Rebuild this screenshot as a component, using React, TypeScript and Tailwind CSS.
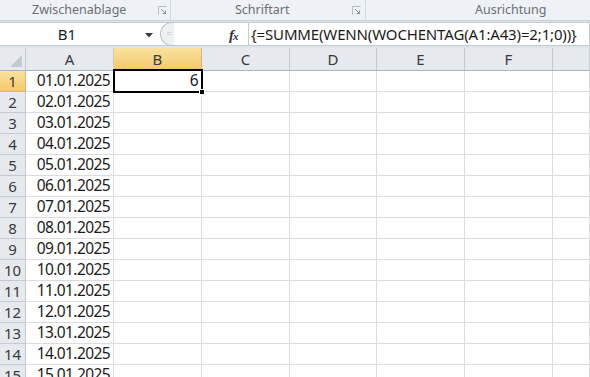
import React from "react";

const cols = ["A", "B", "C", "D", "E", "F", "G"];
const widths = ["w-[88px]", "w-[88px]", "w-[88px]", "w-[87px]", "w-[88px]", "w-[88px]", "flex-1"];

function Launcher() {
  return (
    <svg width="9" height="9" viewBox="0 0 9 9" className="shrink-0">
      <path d="M0.5 0.5 H8.5 M0.5 0.5 V8.5" stroke="#b4bcc6" strokeWidth="1" fill="none" />
      <path d="M3 3 L7.5 7.5 M7.5 4.5 V7.5 H4.5" stroke="#8c96a3" strokeWidth="1" fill="none" />
    </svg>
  );
}

export default function App() {
  const rows = Array.from({ length: 15 }, (_, i) => i + 1);
  return (
    <div className="w-[590px] h-[377px] overflow-hidden bg-white relative font-['Noto_Sans',sans-serif] select-none">
      {/* Ribbon group labels */}
      <div className="h-[21px] flex bg-[#eef1f5] border-b border-[#c9d0d9] text-[12.5px] text-[#6b6f75] leading-none">
        <div className="w-[171px] border-r border-[#d3d9e0] flex items-center relative">
          <span className="ml-[32px]">Zwischenablage</span>
          <div className="absolute left-[158px] top-[6px]"><Launcher /></div>
        </div>
        <div className="w-[195px] border-r border-[#d3d9e0] flex items-center relative">
          <span className="ml-[64px]">Schriftart</span>
          <div className="absolute left-[181px] top-[6px]"><Launcher /></div>
        </div>
        <div className="flex-1 flex items-center">
          <span className="ml-[109px]">Ausrichtung</span>
        </div>
      </div>

      {/* Formula bar */}
      <div className="h-[27px] bg-[#dfe4ea] flex pt-[1px] pb-[2px]">
        <div className="w-[160px] bg-white border-y border-[#c3cad3] flex items-center relative">
          <span className="flex-1 text-center text-[15px] text-[#1c1c1c] pr-[26px]">B1</span>
          <svg width="8" height="5" viewBox="0 0 8 5" className="absolute left-[145px] top-[10px]">
            <path d="M0 0 H8 L4 4.5 Z" fill="#3c3c3c" />
          </svg>
        </div>
        <div className="w-[88px] bg-white border-y border-[#c3cad3] flex items-center relative">
          <div className="absolute left-[0px] top-[-1px] w-[14px] h-[24px] rounded-l-full border-l border-y border-[#b9c1cb] bg-[#eef1f4]" />
          <div className="absolute left-[7px] top-[9px] w-[4px] h-[3px] border-y border-[#cfd4da]" />
          <span className="absolute left-[69px] top-[1px] italic font-['Liberation_Serif',serif] font-bold text-[15px] text-[#333] tracking-[-1px]">
            f<span className="text-[11px]">x</span>
          </span>
        </div>
        <div className="flex-1 bg-white border border-[#c3cad3] flex items-center pl-[2px] text-[15px] text-[#1a1a1a] tracking-[-0.15px] whitespace-nowrap">
          {"{=SUMME(WENN(WOCHENTAG(A1:A43)=2;1;0))}"}
        </div>
      </div>

      {/* Column headers */}
      <div className="h-[23px] flex bg-[#e6eaef] border-b border-[#a9b5c4] text-[15px] text-[#3a3a3a]">
        <div className="w-[26px] border-r border-[#c3cad4] relative">
          <svg width="12" height="12" viewBox="0 0 12 12" className="absolute right-[3px] bottom-[3px]">
            <path d="M12 0 L12 12 L0 12 Z" fill="#c3c9d1" />
          </svg>
        </div>
        {cols.map((c, i) => (
          <div
            key={c}
            className={`${widths[i]} flex items-center justify-center border-r ${
              c === "B"
                ? "bg-gradient-to-b from-[#fbe29e] to-[#f3c869] border-[#e2b35a]"
                : "border-[#c3cad4]"
            }`}
          >
            {c !== "G" ? c : ""}
          </div>
        ))}
      </div>

      {/* Grid rows */}
      {rows.map((r) => (
        <div key={r} className="h-[21px] flex text-[15px] leading-none">
          <div
            className={`w-[26px] flex items-center justify-center border-r border-b text-[#3a3a3a] ${
              r === 1
                ? "bg-gradient-to-b from-[#fbe29e] to-[#f3c869] border-[#e2b35a]"
                : "bg-[#e6eaef] border-[#c3cad4]"
            }`}
          >
            {r}
          </div>
          {cols.map((c, i) => (
            <div
              key={c}
              className={`${widths[i]} border-r border-b border-[#dadcdd] flex items-center justify-end pr-[3px] text-[#1a1a1a] text-[15.5px] tracking-[-0.6px]`}
            >
              {c === "A" ? `${String(r).padStart(2, "0")}.01.2025` : c === "B" && r === 1 ? "6" : ""}
            </div>
          ))}
        </div>
      ))}

      {/* Selection box on B1 */}
      <div className="absolute left-[113px] top-[69px] w-[90px] h-[24px] border-2 border-black pointer-events-none" />
      <div className="absolute left-[199px] top-[89px] w-[6px] h-[6px] bg-black border border-white" />
    </div>
  );
}
